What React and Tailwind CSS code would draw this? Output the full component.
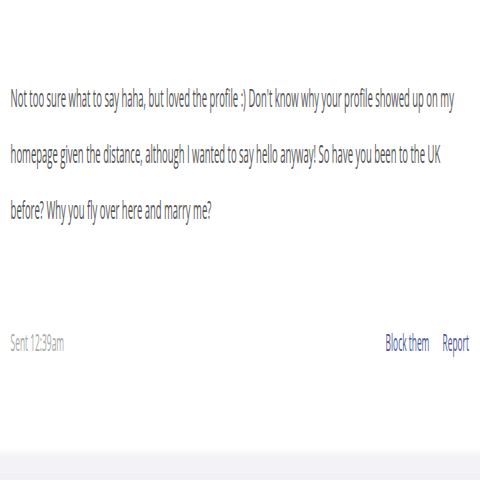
import React from "react";

const lines = [
  "Not too sure what to say haha, but loved the profile :) Don't know why your profile showed up on my",
  "homepage given the distance, although I wanted to say hello anyway! So have you been to the UK",
  "before? Why you fly over here and marry me?",
];

export default function App() {
  return (
    <div className="w-[480px] h-[480px] bg-white flex flex-col overflow-hidden" style={{ fontFamily: '"Open Sans", sans-serif' }}>
      <div className="flex-1 overflow-hidden">
        <div className="w-[1315px] origin-top-left scale-x-[0.365] pt-[69px] pl-[29px] pr-[30px]">
          <div className="text-[26px] leading-[56px] text-[#555]">
            {lines.map((l) => (
              <div key={l} className="whitespace-nowrap">{l}</div>
            ))}
          </div>
          <div className="mt-[79px] flex items-center text-[23px] leading-[52px]">
            <span className="text-[#a8a8a8]">Sent 12:39am</span>
            <div className="ml-auto flex gap-[36px] text-[#4a5599]">
              <a>Block them</a>
              <a>Report</a>
            </div>
          </div>
        </div>
      </div>
      <div className="h-2 bg-gradient-to-b from-white to-[#f3f3f7]" />
      <div className="h-[16px] bg-[#f2f2f7]" />
      <div className="h-[8px] bg-[#f0f0f5] border-t border-[#f6f6fa]" />
    </div>
  );
}
